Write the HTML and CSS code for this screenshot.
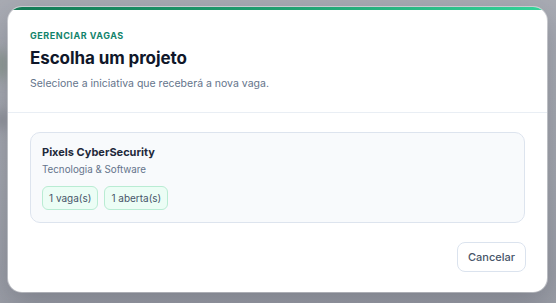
FILE: index.html
```html
<!DOCTYPE html>
<html lang="pt-BR">
<head>
<meta charset="utf-8">
<link rel="stylesheet" href="styles.css">
</head>
<body>
<div class="backdrop">
  <div class="blur blur-a"></div>
  <div class="blur blur-b"></div>
  <div class="modal">
    <div class="accent"></div>
    <header class="modal-header">
      <div class="eyebrow">GERENCIAR VAGAS</div>
      <h1 class="title">Escolha um projeto</h1>
      <p class="subtitle">Selecione a iniciativa que receberá a nova vaga.</p>
    </header>
    <section class="modal-body">
      <div class="project-card">
        <div class="project-name">Pixels CyberSecurity</div>
        <div class="project-sector">Tecnologia &amp; Software</div>
        <div class="badges">
          <span class="badge">1 vaga(s)</span>
          <span class="badge">1 aberta(s)</span>
        </div>
      </div>
    </section>
    <footer class="modal-footer">
      <button class="btn-cancel">Cancelar</button>
    </footer>
  </div>
</div>
</body>
</html>
```
FILE: styles.css
```css
* { box-sizing: border-box; }
html, body { margin: 0; padding: 0; }
body {
  font-family: Inter, "Noto Sans", sans-serif;
  background: #a6a9b1;
  width: 556px;
  height: 303px;
  overflow: hidden;
}
.backdrop {
  position: relative;
  width: 556px;
  height: 303px;
  padding: 7px 9px 11px 8px;
  background: linear-gradient(180deg, #a9acb4 0%, #a3a6ae 60%, #9a9da6 100%);
}
.blur {
  position: absolute;
  border-radius: 50%;
  filter: blur(6px);
}
.blur-a { left: -10px; top: 50px; width: 20px; height: 30px; background: #8f9a95; }
.blur-b { left: -6px; top: 110px; width: 14px; height: 20px; background: #8b8e96; }
.modal {
  position: relative;
  width: 539px;
  height: 285px;
  background: #ffffff;
  border-radius: 14px;
  overflow: hidden;
  box-shadow: 0 10px 30px rgba(30, 35, 50, 0.25), 0 0 0 1px rgba(255,255,255,0.5);
  display: flex;
  flex-direction: column;
}
.accent {
  height: 3px;
  background: linear-gradient(90deg, #137a55 0%, #1f9f70 50%, #34d399 100%);
  flex: none;
}
.modal-header {
  padding: 20px 22px 21px;
  border-bottom: 1px solid #e9eef4;
}
.eyebrow {
  font-size: 9px;
  font-weight: 700;
  letter-spacing: 0.06em;
  color: #12836b;
  line-height: 12px;
}
.title {
  margin: 4px 0 0;
  font-size: 17px;
  font-weight: 700;
  color: #0f172a;
  line-height: 24px;
  letter-spacing: -0.005em;
}
.subtitle {
  margin: 7px 0 0;
  font-size: 10.5px;
  color: #64748b;
  line-height: 14px;
}
.modal-body {
  padding: 19px 22px 0;
}
.project-card {
  background: #f8fafc;
  border: 1px solid #dde4ee;
  border-radius: 10px;
  padding: 12px 11px 11px;
  height: 91px;
}
.project-name {
  font-size: 11px;
  font-weight: 700;
  color: #1e293b;
  line-height: 15px;
}
.project-sector {
  margin-top: 3px;
  font-size: 9.8px;
  color: #64748b;
  line-height: 13px;
}
.badges {
  display: flex;
  gap: 6px;
  margin-top: 10px;
}
.badge {
  display: inline-flex;
  align-items: center;
  height: 24px;
  padding: 0 6px;
  background: #ecfdf5;
  border: 1px solid #b9ecd3;
  border-radius: 6px;
  font-size: 10px;
  color: #475569;
}
.modal-footer {
  display: flex;
  justify-content: flex-end;
  padding: 19px 21px 0;
}
.btn-cancel {
  height: 30px;
  padding: 0 10px;
  background: #ffffff;
  border: 1px solid #dbe3ee;
  border-radius: 8px;
  font-family: inherit;
  font-size: 11px;
  font-weight: 500;
  color: #475569;
}
```
